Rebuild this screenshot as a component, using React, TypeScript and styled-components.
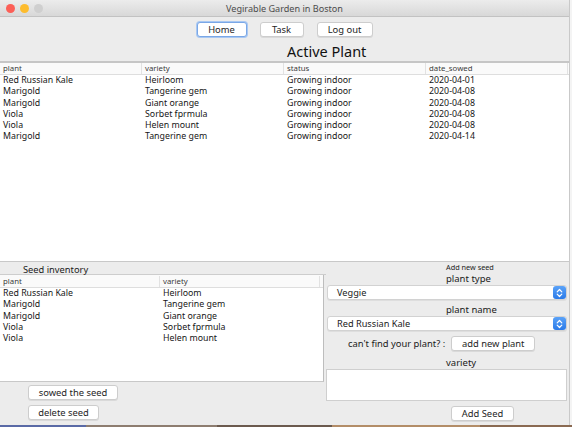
import React from "react";
import styled, { createGlobalStyle } from "styled-components";

const Global = createGlobalStyle`
  html, body { margin: 0; padding: 0; background: #f3f3f3; }
  body { font-family: "Noto Sans", "DejaVu Sans", sans-serif; color: #1c1c1c; }
  * { box-sizing: border-box; }
`;

const Screen = styled.div`
  width: 572px;
  height: 427px;
  display: flex;
  flex-direction: column;
  overflow: hidden;
  background: #f4f4f4;
`;

const Window = styled.div`
  width: 570px;
  height: 425px;
  display: flex;
  flex-direction: column;
  background: #ececec;
  border-right: 1px solid #c9c9c9;
`;

const DesktopStrip = styled.div`
  height: 2px;
  background: linear-gradient(
    90deg,
    #5a6aa6 0 15%,
    #8d7d70 15% 38%,
    #6b5a4e 38% 58%,
    #b38d68 58% 84%,
    #8a6a52 84%
  );
`;

const TitleBar = styled.div`
  height: 17px;
  flex-shrink: 0;
  display: grid;
  grid-template-columns: 1fr auto 1fr;
  align-items: center;
  background: linear-gradient(#ececec, #d8d8d8);
  border-bottom: 1px solid #c2c2c2;
`;

const Lights = styled.div`
  display: flex;
  gap: 5px;
  padding-left: 6px;
`;

const Light = styled.span<{ $c: string }>`
  width: 9px;
  height: 9px;
  border-radius: 50%;
  background: ${(p) => p.$c};
`;

const WindowTitle = styled.div`
  font-size: 9.1px;
  color: #4c4c4c;
`;

const Toolbar = styled.div`
  display: flex;
  flex-shrink: 0;
  justify-content: center;
  gap: 13px;
  padding-top: 5px;
`;

const Button = styled.button<{ $w: number; $focus?: boolean }>`
  width: ${(p) => p.$w}px;
  height: 15px;
  padding: 0;
  font-family: inherit;
  font-size: 9.4px;
  line-height: 13px;
  color: #1e1e1e;
  background: #ffffff;
  border: 1px solid ${(p) => (p.$focus ? "#7aa7e6" : "#cdcdcd")};
  box-shadow: ${(p) =>
    p.$focus ? "0 0 0 1px #a9c8f2" : "0 1px 0 rgba(0,0,0,0.08)"};
  border-radius: 3px;
`;

const HeadingRow = styled.div`
  height: 24px;
  flex-shrink: 0;
  display: flex;
  align-items: flex-end;
  padding-left: 287px;
  padding-bottom: 1px;
`;

const Heading = styled.div`
  font-size: 14.5px;
  line-height: 17px;
  color: #111;
`;

const TablePane = styled.div<{ $h: number; $w?: number }>`
  height: ${(p) => p.$h}px;
  width: ${(p) => (p.$w ? `${p.$w}px` : "auto")};
  flex-shrink: 0;
  background: #ffffff;
  display: flex;
  flex-direction: column;
`;

const HeaderRow = styled.div<{ $cols: string; $top?: number; $h: number }>`
  display: grid;
  grid-template-columns: ${(p) => p.$cols};
  height: ${(p) => p.$h}px;
  align-items: center;
  border-top: ${(p) => p.$top ?? 0}px solid #c6c6c6;
  border-bottom: 1px solid #dedede;
  background: #fafafa;
`;

const HeaderCell = styled.div`
  font-size: 7.8px;
  line-height: 11px;
  padding-left: 3px;
  color: #3a3a3a;
  border-right: 1px solid #e2e2e2;
  white-space: nowrap;
`;

const Row = styled.div<{ $cols: string }>`
  display: grid;
  grid-template-columns: ${(p) => p.$cols};
  height: 11.3px;
`;

const Cell = styled.div`
  font-size: 8.8px;
  line-height: 11.3px;
  padding-left: 3px;
  white-space: nowrap;
  color: #161616;
`;

const Lower = styled.div`
  flex: 1;
  display: grid;
  grid-template-columns: 326px 1fr;
  border-top: 1px solid #c8c8c8;
`;

const LeftPanel = styled.div`
  display: flex;
  flex-direction: column;
`;

const SectionLabel = styled.div`
  height: 13px;
  padding-left: 23px;
  font-size: 9.3px;
  line-height: 15px;
  color: #1a1a1a;
  border-bottom: 1px solid #cdcdcd;
`;

const SeedPane = styled(TablePane)`
  border-right: 1px solid #bdbdbd;
  border-bottom: 1px solid #c8c8c8;
`;

const ButtonStack = styled.div`
  display: flex;
  flex-direction: column;
  align-items: flex-start;
  gap: 5px;
  padding: 3px 0 0 28px;
`;

const RightPanel = styled.div`
  display: flex;
  flex-direction: column;
  padding-right: 2px;
`;

const SmallLabel = styled.div`
  font-size: 7.3px;
  line-height: 10px;
  padding-left: 120px;
  color: #222;
`;

const FieldLabel = styled.div<{ $mt?: number }>`
  font-size: 9.5px;
  line-height: 13px;
  padding-left: 120px;
  margin-top: ${(p) => p.$mt ?? 0}px;
  color: #1a1a1a;
`;

const Select = styled.div`
  margin-left: 1px;
  height: 15px;
  display: flex;
  align-items: center;
  justify-content: space-between;
  background: #ffffff;
  border: 1px solid #d2d2d2;
  border-radius: 3px;
  box-shadow: 0 1px 0 rgba(0, 0, 0, 0.06);
  padding-left: 9px;
  font-size: 9.2px;
  color: #1a1a1a;
`;

const Stepper = styled.span`
  width: 13px;
  height: 13px;
  border-radius: 3px;
  background: linear-gradient(#5aa2f8, #2a7ae8);
  display: flex;
  align-items: center;
  justify-content: center;
`;

const FindRow = styled.div`
  display: flex;
  align-items: center;
  gap: 6px;
  margin-top: 5px;
  padding-left: 22px;
`;

const FindText = styled.span`
  font-size: 9.4px;
  color: #1a1a1a;
`;

const TextArea = styled.div`
  height: 32px;
  background: #ffffff;
  border: 1px solid #cfcfcf;
`;

const ActionRow = styled.div`
  display: flex;
  padding-left: 125px;
  margin-top: 5px;
`;

const mainCols = "repeat(4, 142px)";
const seedCols = "160px 160px";

const active = [
  ["Red Russian Kale", "Heirloom", "Growing indoor", "2020-04-01"],
  ["Marigold", "Tangerine gem", "Growing indoor", "2020-04-08"],
  ["Marigold", "Giant orange", "Growing indoor", "2020-04-08"],
  ["Viola", "Sorbet fprmula", "Growing indoor", "2020-04-08"],
  ["Viola", "Helen mount", "Growing indoor", "2020-04-08"],
  ["Marigold", "Tangerine gem", "Growing indoor", "2020-04-14"],
];

const seeds = [
  ["Red Russian Kale", "Heirloom"],
  ["Marigold", "Tangerine gem"],
  ["Marigold", "Giant orange"],
  ["Viola", "Sorbet fprmula"],
  ["Viola", "Helen mount"],
];

const StepIcon = () => (
  <svg width="7" height="10" viewBox="0 0 7 10" fill="none">
    <path d="M1.2 3.8 L3.5 1.5 L5.8 3.8" stroke="#fff" strokeWidth="1.2" strokeLinecap="round" strokeLinejoin="round" />
    <path d="M1.2 6.2 L3.5 8.5 L5.8 6.2" stroke="#fff" strokeWidth="1.2" strokeLinecap="round" strokeLinejoin="round" />
  </svg>
);

export default function App() {
  return (
    <Screen>
      <Global />
      <Window>
        <TitleBar>
          <Lights>
            <Light $c="#fc5f57" />
            <Light $c="#fdbc2e" />
            <Light $c="#cfcfcf" />
          </Lights>
          <WindowTitle>Vegirable Garden in Boston</WindowTitle>
          <span />
        </TitleBar>

        <Toolbar>
          <Button $w={50} $focus>Home</Button>
          <Button $w={44}>Task</Button>
          <Button $w={56}>Log out</Button>
        </Toolbar>

        <HeadingRow>
          <Heading>Active Plant</Heading>
        </HeadingRow>

        <TablePane $h={200}>
          <HeaderRow $cols={mainCols} $top={2} $h={14}>
            <HeaderCell>plant</HeaderCell>
            <HeaderCell>variety</HeaderCell>
            <HeaderCell>status</HeaderCell>
            <HeaderCell>date_sowed</HeaderCell>
          </HeaderRow>
          {active.map((r, i) => (
            <Row key={i} $cols={mainCols}>
              {r.map((c, j) => (
                <Cell key={j}>{c}</Cell>
              ))}
            </Row>
          ))}
        </TablePane>

        <Lower>
          <LeftPanel>
            <SectionLabel>Seed inventory</SectionLabel>
            <SeedPane $h={107} $w={324}>
              <HeaderRow $cols={seedCols} $h={13}>
                <HeaderCell>plant</HeaderCell>
                <HeaderCell>variety</HeaderCell>
              </HeaderRow>
              {seeds.map((r, i) => (
                <Row key={i} $cols={seedCols}>
                  {r.map((c, j) => (
                    <Cell key={j}>{c}</Cell>
                  ))}
                </Row>
              ))}
            </SeedPane>
            <ButtonStack>
              <Button $w={90}>sowed the seed</Button>
              <Button $w={71}>delete seed</Button>
            </ButtonStack>
          </LeftPanel>

          <RightPanel>
            <SmallLabel>Add new seed</SmallLabel>
            <FieldLabel>plant type</FieldLabel>
            <Select>
              Veggie
              <Stepper>
                <StepIcon />
              </Stepper>
            </Select>
            <FieldLabel $mt={3}>plant name</FieldLabel>
            <Select>
              Red Russian Kale
              <Stepper>
                <StepIcon />
              </Stepper>
            </Select>
            <FindRow>
              <FindText>can't find your plant? :</FindText>
              <Button $w={84}>add new plant</Button>
            </FindRow>
            <FieldLabel $mt={5}>variety</FieldLabel>
            <TextArea />
            <ActionRow>
              <Button $w={63}>Add Seed</Button>
            </ActionRow>
          </RightPanel>
        </Lower>
      </Window>
      <DesktopStrip />
    </Screen>
  );
}
